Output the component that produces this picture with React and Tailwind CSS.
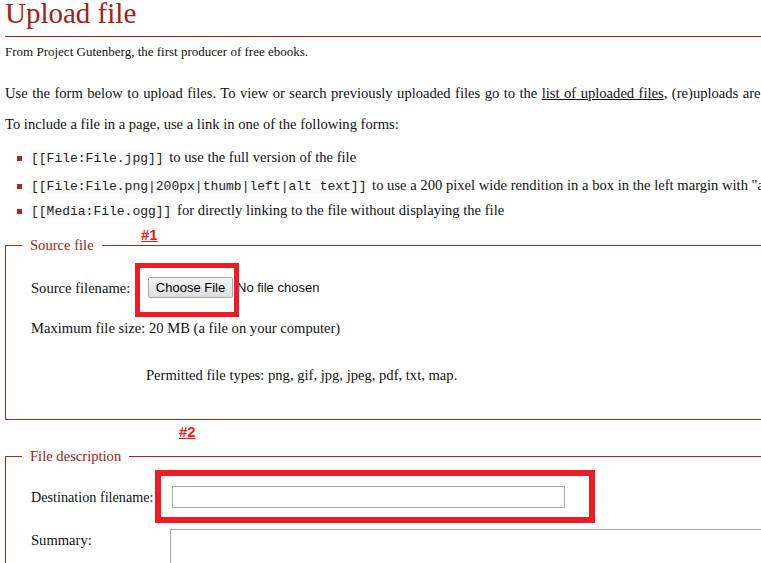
import React from "react";

const serif = { fontFamily: '"Liberation Serif", "Times New Roman", serif' };

function Code({ children }) {
  return (
    <code
      className="bg-[#f9f9f9] px-[2px] text-[13px] leading-[16px] text-[#222]"
      style={{ fontFamily: '"Liberation Mono", "Courier New", monospace' }}
    >
      {children}
    </code>
  );
}

function Bullet({ className, children }) {
  return (
    <li className={"flex items-center ml-[17px] h-[20px] " + className}>
      <span className="w-[5px] h-[5px] mt-[1px] mr-[7px] bg-[#a3291d] shrink-0"></span>
      <span className="whitespace-nowrap leading-[16px]">{children}</span>
    </li>
  );
}

function Marker({ className, children }) {
  return (
    <span
      className={"absolute text-[15px] leading-[15px] font-bold underline text-[#ed1c24] " + className}
      style={{ fontFamily: '"Liberation Sans", Arial, sans-serif' }}
    >
      {children}
    </span>
  );
}

export default function App() {
  return (
    <div className="relative w-[761px] h-[563px] overflow-hidden bg-white text-[#111]" style={serif}>
      <div className="w-[1200px]">
        <h1 className="ml-[5px] text-[29px] leading-[26px] text-[#a0211a] border-b border-[#a51d12] pb-[10px]">
          Upload file
        </h1>
        <p className="ml-[5px] mt-[8px] text-[13px] leading-[14px]">
          From Project Gutenberg, the first producer of free ebooks.
        </p>

        <p className="ml-[5px] mt-[26px] text-[14.6px] leading-[16px] whitespace-nowrap [word-spacing:0.8px]">
          Use the form below to upload files. To view or search previously uploaded files go to the{" "}
          <span className="underline">list of uploaded files</span>, (re)uploads are also logged in the upload log,
          deletions in the deletion log.
        </p>
        <p className="ml-[5px] mt-[15px] text-[14.6px] leading-[16px]">
          To include a file in a page, use a link in one of the following forms:
        </p>

        <ul className="mt-[16px] text-[14.6px]">
          <Bullet className="">
            <Code>[[File:File.jpg]]</Code> to use the full version of the file
          </Bullet>
          <Bullet className="mt-[8px]">
            <Code>[[File:File.png|200px|thumb|left|alt text]]</Code> to use a 200 pixel wide rendition in a box in
            the left margin with "alt text" as description
          </Bullet>
          <Bullet className="mt-[5px]">
            <Code>[[Media:File.ogg]]</Code> for directly linking to the file without displaying the file
          </Bullet>
        </ul>

        <fieldset className="mt-[16px] ml-[5px] border border-[#a3291d] pl-[16px] pb-[36px] text-[14.6px]">
          <legend className="px-2 leading-[16px] text-[#a0211a]">Source file</legend>
          <div className="flex items-center ml-[9px] mt-[24px] h-[21px]">
            <span className="w-[117px] leading-[16px]">Source filename:</span>
            <span className="relative">
              <button
                className="w-[85px] h-[21px] border border-[#a9a9a9] rounded-[2px] bg-gradient-to-b from-[#f4f4f4] to-[#dedede] text-[13px] text-black"
                style={{ fontFamily: '"Liberation Sans", Arial, sans-serif' }}
              >
                Choose File
              </button>
              <span className="absolute left-[-13px] top-[-14px] w-[104px] h-[54px] border-[5px] border-[#ed1c24]"></span>
            </span>
            <span
              className="ml-[4px] text-[13px]"
              style={{ fontFamily: '"Liberation Sans", Arial, sans-serif' }}
            >
              No file chosen
            </span>
          </div>
          <p className="ml-[9px] mt-[22px] leading-[16px]">Maximum file size: 20 MB (a file on your computer)</p>
          <p className="ml-[124px] mt-[31px] leading-[16px]">
            Permitted file types: png, gif, jpg, jpeg, pdf, txt, map.
          </p>
        </fieldset>

        <fieldset className="mt-[28px] ml-[5px] border border-[#a3291d] pl-[16px] pb-[40px] text-[14.6px]">
          <legend className="px-2 leading-[16px] text-[#a0211a]">File description</legend>
          <div className="flex items-center ml-[9px] mt-[22px]">
            <span className="w-[141px] text-[14.2px] leading-[16px] whitespace-nowrap">Destination filename:</span>
            <span className="relative">
              <input type="text" className="block w-[393px] h-[22px] border border-[#a9a9a9] bg-white" />
              <span className="absolute left-[-17px] top-[-16px] w-[440px] h-[53px] border-[6px] border-[#ed1c24]"></span>
            </span>
          </div>
          <div className="flex items-start ml-[9px] mt-[21px]">
            <span className="w-[139px] mt-[3px] leading-[16px]">Summary:</span>
            <textarea className="block w-[900px] h-[120px] border border-[#a9a9a9] bg-white resize-none"></textarea>
          </div>
        </fieldset>
      </div>

      <Marker className="left-[141px] top-[227px]">#1</Marker>
      <Marker className="left-[179px] top-[424px]">#2</Marker>
    </div>
  );
}
